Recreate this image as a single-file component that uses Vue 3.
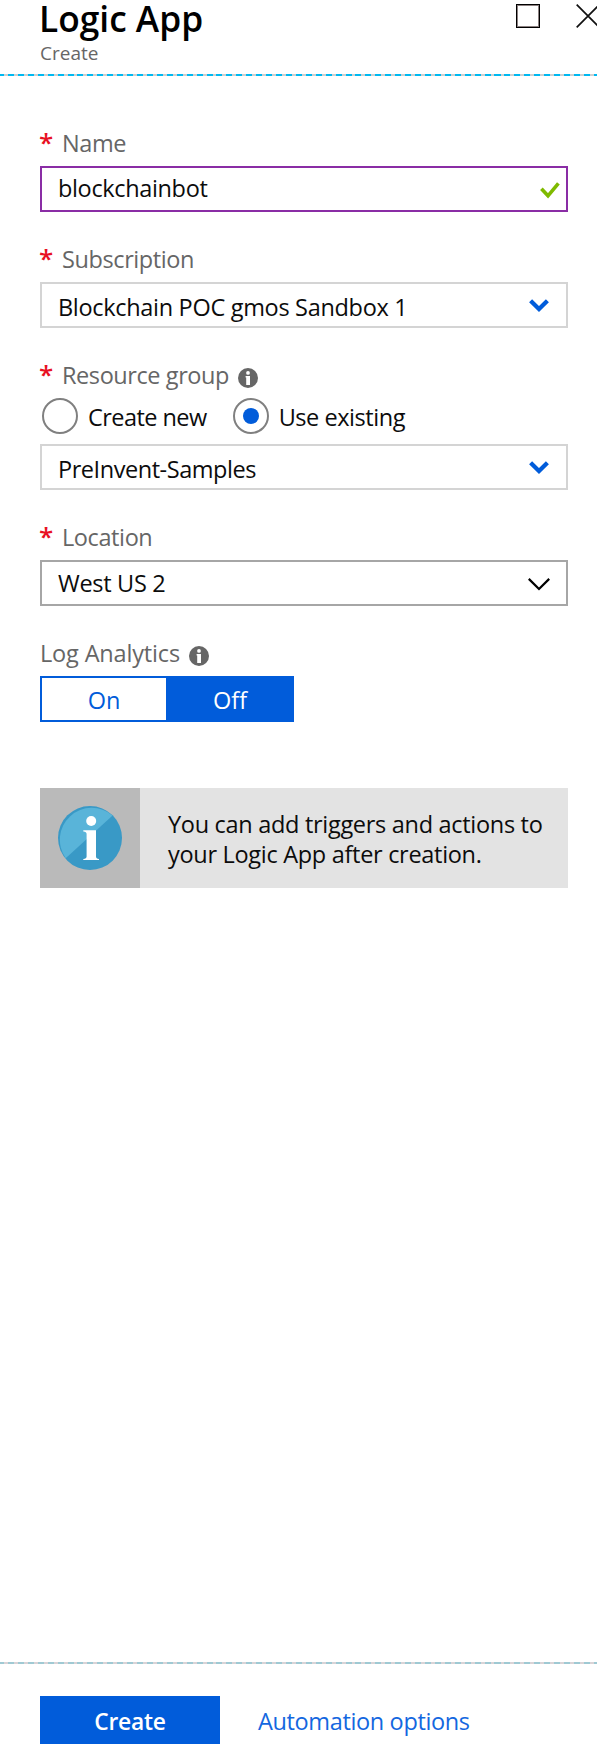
<script setup>
import { ref } from 'vue'

const group = ref('existing')
const analytics = ref('Off')
</script>

<template>
  <main class="blade">
    <header class="head">
      <div>
        <h1 class="title">Logic App</h1>
        <p class="subtitle">Create</p>
      </div>
      <div class="controls">
        <svg class="maximize" width="24" height="24" viewBox="0 0 24 24">
          <rect x="1.25" y="1.25" width="21.5" height="21.5" fill="none" stroke="#8b8080" stroke-width="1.5" />
          <rect x="0.5" y="0.5" width="23" height="23" fill="none" stroke="#000" />
        </svg>
        <svg class="close" width="24" height="24" viewBox="0 0 24 24">
          <path d="M0.7 0.7L23.3 23.3M23.3 0.7L0.7 23.3" fill="none" stroke="#111" stroke-width="1.7" />
        </svg>
      </div>
    </header>
    <div class="rule rule-top"></div>

    <section class="form">
      <div class="label"><span class="star">*</span><span class="t-name">Name</span></div>
      <div class="box box-active">
        <span class="t-input">blockchainbot</span>
        <svg class="check" width="20" height="17" viewBox="0 0 20 17">
          <path d="M1.4 6.8L8 13.8L18.4 1.4" fill="none" stroke="#7fba00" stroke-width="3.6" />
        </svg>
      </div>

      <div class="label"><span class="star">*</span><span class="t-sub">Subscription</span></div>
      <div class="box low">
        <span class="t-plan">Blockchain POC gmos Sandbox 1</span>
        <svg class="chev" width="20" height="14" viewBox="0 0 20 14">
          <path d="M1.6 1.8L10 10L18.4 1.8" fill="none" stroke="#015cda" stroke-width="4.3" />
        </svg>
      </div>

      <div class="label">
        <span class="star">*</span><span class="t-group">Resource group</span>
        <svg class="info" width="20" height="20" viewBox="0 0 20 20">
          <circle cx="10" cy="10" r="10" fill="#666" />
          <circle cx="10" cy="4.9" r="1.9" fill="#fff" />
          <path d="M7.6 8H12v9H8.2V9.4h-.6z" fill="#fff" />
        </svg>
      </div>
      <div class="radios">
        <label class="radio" @click="group = 'new'">
          <i class="ring"><b v-if="group === 'new'" class="dot"></b></i>
          <span class="t-new">Create new</span>
        </label>
        <label class="radio" @click="group = 'existing'">
          <i class="ring"><b v-if="group === 'existing'" class="dot"></b></i>
          <span class="t-existing">Use existing</span>
        </label>
      </div>
      <div class="box low">
        <span class="t-samples">PreInvent-Samples</span>
        <svg class="chev" width="20" height="14" viewBox="0 0 20 14">
          <path d="M1.6 1.8L10 10L18.4 1.8" fill="none" stroke="#015cda" stroke-width="4.3" />
        </svg>
      </div>

      <div class="label"><span class="star">*</span><span class="t-loc">Location</span></div>
      <div class="box box-dark">
        <span class="t-west">West US 2</span>
        <svg class="chev-thin" width="22" height="13" viewBox="0 0 22 13">
          <path d="M0.8 0.9L11 11L21.2 0.9" fill="none" stroke="#000" stroke-width="2.2" />
        </svg>
      </div>

      <div class="label">
        <span class="t-log">Log Analytics</span>
        <svg class="info" width="20" height="20" viewBox="0 0 20 20">
          <circle cx="10" cy="10" r="10" fill="#666" />
          <circle cx="10" cy="4.9" r="1.9" fill="#fff" />
          <path d="M7.6 8H12v9H8.2V9.4h-.6z" fill="#fff" />
        </svg>
      </div>
      <div class="toggle">
        <button
          v-for="o in ['On', 'Off']"
          :key="o"
          class="option"
          :class="{ selected: analytics === o }"
          @click="analytics = o"
        >{{ o }}</button>
      </div>

      <aside class="notice">
        <div class="notice-icon">
          <svg width="64" height="64" viewBox="0 0 64 64">
            <circle cx="32" cy="32" r="32" fill="#3999c6" />
            <path d="M7.7 52.2A32 32 0 0 1 54.6 9.4Z" fill="#59b4d9" />
            <circle cx="33.2" cy="15" r="5" fill="#fff" />
            <path d="M25.3 24.3H38V50.5Q38 52.8 41 53V54H25.3V53Q28.6 52.8 28.6 50.5V28Q28.6 25.8 25.3 25.4Z" fill="#fff" />
          </svg>
        </div>
        <p class="notice-text">You can add triggers and actions to<br />your Logic App after creation.</p>
      </aside>
    </section>

    <footer class="foot">
      <div class="rule rule-bottom"></div>
      <div class="actions">
        <button class="create">Create</button>
        <a class="link">Automation options</a>
      </div>
    </footer>
  </main>
</template>

<style>
html,
body {
  background: #fff;
}
</style>

<style scoped>
.blade {
  display: flex;
  flex-direction: column;
  width: 597px;
  height: 1759px;
  box-sizing: border-box;
  overflow: hidden;
  font-family: "Open Sans", "Noto Sans", sans-serif;
  font-size: 23.5px;
  color: #0c0c0c;
}
.head {
  display: flex;
  justify-content: space-between;
  height: 74px;
  flex: none;
}
.title {
  margin: 0 0 0 39px;
  font-size: 35.3px;
  font-weight: 600;
  line-height: 36px;
  color: #000;
}
.subtitle {
  margin: 0 0 0 40px;
  font-size: 19px;
  line-height: 35px;
  color: #666;
}
.controls {
  display: flex;
  gap: 36px;
  padding-top: 4px;
  margin-right: -3px;
}
.rule {
  flex: none;
  height: 2px;
}
.rule-top {
  background: repeating-linear-gradient(90deg, #00b9f1 0 6px, #cfcfcf 6px 9.93px) -2px 0 / 610px 2px;
}
.rule-bottom {
  background: repeating-linear-gradient(90deg, #9fc9d3 0 6px, #d9d3d6 6px 9.93px) -2px 0 / 610px 2px;
}
.form {
  display: flex;
  flex-direction: column;
  width: 528px;
  margin: 44px 0 0 40px;
}
.label {
  display: flex;
  align-items: center;
  height: 46px;
  color: #666;
  white-space: nowrap;
}
.star {
  width: 22px;
  height: 46px;
  margin-left: -1px;
  margin-right: 1px;
  font-size: 26px;
  font-weight: 600;
  line-height: 44px;
  color: #e81123;
}
.box {
  display: flex;
  align-items: center;
  justify-content: space-between;
  box-sizing: border-box;
  height: 46px;
  margin-bottom: 24px;
  padding: 0 17px 0 16px;
  border: 2px solid #d4d4d4;
  line-height: 42px;
  white-space: nowrap;
}
.low span {
  padding-top: 4px;
  line-height: 38px;
}
.low .chev {
  margin-top: 2px;
}
.box-active {
  border-color: #8a2da5;
  padding-right: 6px;
}
.box-active span {
  line-height: 40px;
  padding-bottom: 2px;
}
.box-active .check {
  margin-top: 3px;
}
.box-dark {
  border-color: #a6a6a6;
  padding-right: 16px;
}
.box-dark .chev-thin {
  margin-top: 2px;
}
.info {
  margin: 6px 0 0 9px;
}
.radios {
  display: flex;
  height: 36px;
  margin-bottom: 10px;
  padding-left: 2px;
}
.radio {
  display: flex;
  align-items: center;
  white-space: nowrap;
  line-height: 36px;
}
.radio + .radio {
  margin-left: 26px;
}
.radio span {
  margin-left: 10px;
  padding-top: 3px;
  line-height: 33px;
}
.ring {
  display: flex;
  align-items: center;
  justify-content: center;
  box-sizing: border-box;
  width: 36px;
  height: 36px;
  border: 2px solid #808080;
  border-radius: 50%;
}
.dot {
  width: 16px;
  height: 16px;
  border-radius: 50%;
  background: #015cda;
}
.toggle {
  display: flex;
  box-sizing: border-box;
  width: 254px;
  height: 46px;
  border: 2px solid #015cda;
}
.option {
  flex: 0 0 124px;
  padding: 2px 0 0;
  border: 0;
  background: #fff;
  font: inherit;
  color: #015cda;
}
.option + .option {
  flex: 1;
  padding-left: 2px;
}
.option.selected {
  background: #015cda;
  color: #fff;
}
.notice {
  display: flex;
  height: 100px;
  margin-top: 66px;
  background: #e3e3e3;
}
.notice-icon {
  display: flex;
  align-items: center;
  justify-content: center;
  width: 100px;
  background: #bababa;
  flex: none;
}
.notice-text {
  margin: 21px 0 0 28px;
  line-height: 30px;
  letter-spacing: -0.3px;
  white-space: nowrap;
}
.foot {
  margin-top: auto;
  height: 97px;
  flex: none;
}
.actions {
  display: flex;
  padding: 32px 0 0 40px;
}
.create {
  width: 180px;
  height: 48px;
  padding: 2px 0 0;
  border: 0;
  background: #015cda;
  color: #fff;
  font: 600 22.8px "Open Sans", "Noto Sans", sans-serif;
  letter-spacing: -0.2px;
}
.link {
  margin-left: 38px;
  padding-top: 2px;
  line-height: 46px;
  letter-spacing: -0.36px;
  color: #1467e0;
  white-space: nowrap;
}
.t-name { letter-spacing: -0.4px; }
.t-input { letter-spacing: -0.35px; }
.t-sub { letter-spacing: -0.4px; }
.t-plan { letter-spacing: -0.31px; }
.t-group { letter-spacing: -0.42px; }
.t-new { letter-spacing: -0.55px; }
.t-existing { letter-spacing: -0.45px; }
.t-samples { letter-spacing: -0.45px; }
.t-loc { letter-spacing: -0.4px; }
.t-west { letter-spacing: -0.3px; }
.t-log { letter-spacing: -0.16px; }
</style>
